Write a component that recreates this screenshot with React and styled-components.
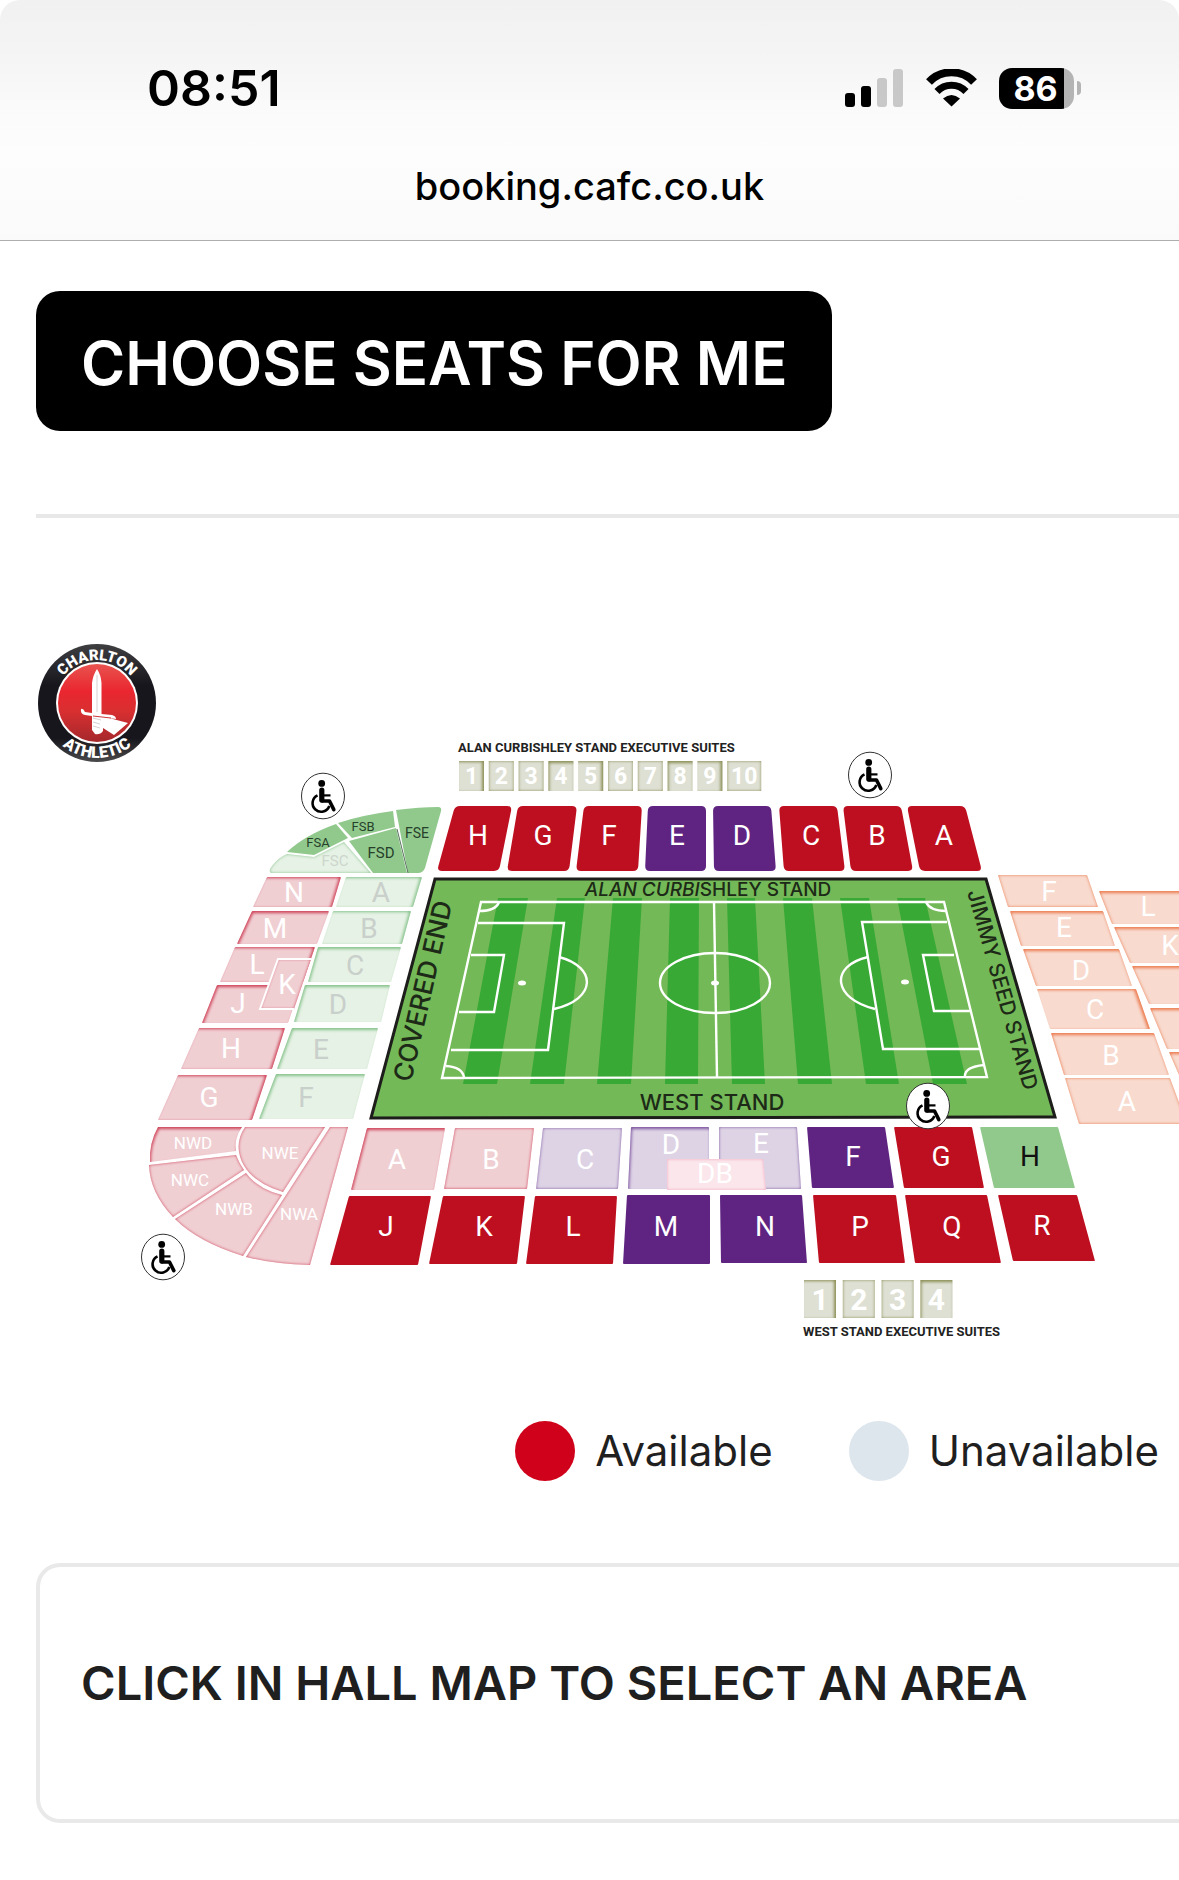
import React from "react";
import styled, { createGlobalStyle } from "styled-components";

const GlobalStyle = createGlobalStyle`
  * { box-sizing: border-box; }
  body { margin: 0; background: #fff; overflow-x: hidden; }
`;

const Page = styled.div`
  min-height: 100vh;
  color: #1f1f1f;
  font-family: Inter, "Liberation Sans", sans-serif;
`;

const BrowserBar = styled.header`
  display: flex;
  flex-direction: column;
  height: 241px;
  padding-top: 56px;
  border-bottom: 1px solid #aeaeb0;
  border-radius: 20px 20px 0 0;
  background: linear-gradient(#f1f1f1 0, #f4f4f4 50px, #fafafa 105px, #fdfdfd 150px, #fafafa 240px);
`;

const StatusRow = styled.div`
  display: flex;
  align-items: center;
  justify-content: space-between;
  height: 64px;
  padding: 0 98px 0 147px;
  color: #000;
`;

const Clock = styled.time`
  font-size: 50px;
  line-height: 64px;
  font-weight: 600;
`;

const StatusIcons = styled.div`
  display: flex;
  align-items: center;
  gap: 22px;
`;

const Battery = styled.div`
  display: flex;
  align-items: center;
  gap: 3px;
`;

const BatteryBody = styled.span`
  width: 75px;
  height: 41px;
  border-radius: 13px;
  background: linear-gradient(90deg, #000 65px, #b4b4b4 65px);
  color: #fff;
  padding-right: 2px;
  font-size: 34px;
  line-height: 41px;
  font-weight: 700;
  text-align: center;
`;

const BatteryTip = styled.span`
  width: 4px;
  height: 14px;
  border-radius: 0 4px 4px 0;
  background: #b4b4b4;
`;

const Address = styled.div`
  margin-top: 42px;
  color: #000;
  font-size: 38px;
  line-height: 48px;
  font-weight: 500;
  text-align: center;
`;

const Content = styled.main`
  padding: 50px 0 56px 36px;
`;

const ChooseButton = styled.button`
  display: block;
  height: 140px;
  padding: 4px 45px 0;
  border: 0;
  border-radius: 24px;
  background: #000;
  color: #fff;
  font: 600 60px/72px Inter, "Liberation Sans", sans-serif;
  white-space: nowrap;
`;

const Divider = styled.hr`
  height: 4px;
  margin: 83px 0 102px;
  border: 0;
  background: #e8e8e8;
`;

const MapFrame = styled.div`
  margin-left: -36px;
`;

const MapSvg = styled.svg`
  display: block;
  width: 100%;
  height: auto;
`;

const MapText = styled.text`
  fill: ${(p) => p.$color || "#fff"};
  font-family: ${(p) => (p.$wide ? "Inter" : "Roboto")}, "Liberation Sans", sans-serif;
  font-size: ${(p) => p.$size || 28}px;
  font-weight: ${(p) => p.$weight || 400};
  text-anchor: ${(p) => p.$anchor || "middle"};
`;

const Legend = styled.ul`
  display: flex;
  justify-content: flex-end;
  gap: 76px;
  margin: 61px 0 0;
  padding: 0 20px 0 0;
  list-style: none;
`;

const LegendItem = styled.li`
  display: flex;
  align-items: center;
  gap: 20px;
  font-size: 42px;
  line-height: 60px;
`;

const Dot = styled.span`
  width: 60px;
  height: 60px;
  border-radius: 50%;
  background: ${(p) => p.$color};
`;

const Panel = styled.section`
  margin-top: 82px;
  padding: 75px 41px 95px;
  border: 4px solid #e9e9e9;
  border-right: 0;
  border-radius: 24px 0 0 24px;
`;

const PanelTitle = styled.h2`
  margin: 0;
  font-size: 47px;
  line-height: 82px;
  font-weight: 600;
  white-space: nowrap;
`;

const FILLS = {
  red: "#be0f20",
  purple: "#5f2482",
  green: "#91c98d",
  pink: "#f0cfd3",
  mint: "#e6f2e5",
  lilac: "#ddd3e5",
  peach: "#f8dace",
  rose: "#fbe6ec",
  stone: "#dee0d3",
};

const EDGES = {
  pink: "#cf4258",
  mint: "#86c28b",
  lilac: "#7e55a0",
  peach: "#ec7c50",
  rose: "#f3a5bb",
  stone: "#8b8e55",
};

const SHIFTS = { n: [0, 0], tl: [1, 2], tr: [-2, 1] };

function quad(points, r) {
  const n = points.length;
  let d = "";
  points.forEach((p, i) => {
    const a = points[(i + n - 1) % n];
    const b = points[(i + 1) % n];
    const la = Math.hypot(a[0] - p[0], a[1] - p[1]);
    const lb = Math.hypot(b[0] - p[0], b[1] - p[1]);
    const s = [p[0] + ((a[0] - p[0]) * r) / la, p[1] + ((a[1] - p[1]) * r) / la];
    const e = [p[0] + ((b[0] - p[0]) * r) / lb, p[1] + ((b[1] - p[1]) * r) / lb];
    d += `${i ? "L" : "M"}${s[0]} ${s[1]}Q${p[0]} ${p[1]} ${e[0]} ${e[1]}`;
  });
  return d + "Z";
}

// [label, tone, top y, top-left x, top-right x, bottom y, bottom-left x, bottom-right x, label x, label y, shade]
const CURBISHLEY = [
  ["H", "red", 806, 455, 512, 871, 437, 499, 478, 845],
  ["G", "red", 806, 518, 577, 871, 507, 569, 543, 845],
  ["F", "red", 806, 584, 642, 871, 576, 638, 609, 845],
  ["E", "purple", 806, 648, 706, 871, 645, 706, 677, 845],
  ["D", "purple", 806, 713, 771, 871, 714, 776, 742, 845],
  ["C", "red", 806, 779, 837, 871, 784, 845, 811, 845],
  ["B", "red", 806, 843, 901, 871, 851, 913, 877, 845],
  ["A", "red", 806, 907, 965, 871, 920, 982, 944, 845],
];

const COVERED_END = [
  ["N", "pink", 877, 267, 341, 907, 253, 332, 294, 902, "tr"],
  ["M", "pink", 911, 252, 329, 944, 237, 317, 275, 938, "tl"],
  ["L", "pink", 947, 235, 315, 982, 220, 303, 257, 974, "tr"],
  ["J", "pink", 985, 217, 301, 1023, 202, 288, 238, 1013, "tl"],
  ["H", "pink", 1028, 199, 285, 1069, 181, 272, 231, 1058, "tr"],
  ["G", "pink", 1075, 178, 267, 1120, 158, 252, 209, 1107, "tr"],
  ["A", "mint", 877, 346, 422, 907, 336, 413, 381, 902, "tr"],
  ["B", "mint", 911, 333, 411, 944, 322, 402, 369, 938, "tr"],
  ["C", "mint", 947, 318, 401, 982, 308, 391, 355, 975, "tl"],
  ["D", "mint", 985, 305, 390, 1022, 294, 381, 338, 1014, "tl"],
  ["E", "mint", 1028, 292, 378, 1069, 277, 367, 321, 1059, "tl"],
  ["F", "mint", 1074, 276, 365, 1119, 259, 353, 306, 1107, "tl"],
];

const WEST = [
  ["A", "pink", 1128, 367, 445, 1190, 351, 434, 397, 1169, "tl"],
  ["B", "pink", 1128, 455, 534, 1189, 444, 527, 491, 1169, "n"],
  ["C", "lilac", 1128, 543, 622, 1189, 536, 618, 585, 1169, "n"],
  ["D", "lilac", 1127, 631, 709, 1189, 628, 709, 671, 1154, "tl"],
  ["E", "lilac", 1127, 719, 797, 1189, 719, 801, 761, 1153, "n"],
  ["DB", "rose", 1159, 667, 763, 1190, 667, 766, 715, 1183, "n"],
  ["F", "purple", 1127, 807, 885, 1188, 812, 894, 853, 1166],
  ["G", "red", 1127, 894, 972, 1188, 904, 984, 941, 1166],
  ["H", "green", 1127, 980, 1058, 1188, 994, 1075, 1030, 1166],
  ["J", "red", 1196, 349, 431, 1265, 330, 418, 386, 1236],
  ["K", "red", 1196, 443, 525, 1264, 429, 517, 484, 1236],
  ["L", "red", 1196, 535, 617, 1264, 526, 613, 573, 1236],
  ["M", "purple", 1195, 627, 710, 1264, 623, 710, 666, 1236],
  ["N", "purple", 1195, 720, 802, 1263, 721, 807, 765, 1236],
  ["P", "red", 1195, 813, 896, 1263, 819, 905, 860, 1236],
  ["Q", "red", 1195, 905, 987, 1263, 915, 1001, 952, 1236],
  ["R", "red", 1195, 998, 1077, 1261, 1013, 1095, 1042, 1235],
];

const JIMMY_SEED = [
  ["F", "peach", 875, 998, 1087, 907, 1008, 1098, 1049, 901, "n"],
  ["E", "peach", 911, 1010, 1103, 946, 1021, 1115, 1064, 937, "tl"],
  ["D", "peach", 949, 1023, 1119, 986, 1036, 1132, 1081, 980, "tl"],
  ["C", "peach", 989, 1037, 1136, 1029, 1050, 1150, 1095, 1019, "tr"],
  ["B", "peach", 1033, 1051, 1154, 1075, 1064, 1169, 1111, 1065, "tl"],
  ["A", "peach", 1078, 1065, 1170, 1124, 1079, 1187, 1127, 1111, "n"],
  ["L", "peach", 891, 1099, 1210, 924, 1112, 1210, 1148, 916, "tl"],
  ["K", "peach", 927, 1114, 1210, 963, 1130, 1210, 1170, 955, "tl"],
  ["", "peach", 966, 1132, 1210, 1004, 1149, 1210, 0, 0, "tl"],
  ["", "peach", 1008, 1150, 1210, 1049, 1167, 1210, 0, 0, "tl"],
  ["", "peach", 1052, 1169, 1210, 1100, 1190, 1210, 0, 0, "tl"],
];

const labelColor = (tone) => (tone === "mint" ? "#c9cfca" : tone === "green" ? "#111" : "#fff");

function Blocks({ items, radius = 1 }) {
  return items.map(([label, tone, ty, tl, tr, by, bl, br, x, y, shade], i) => (
    <g key={i}>
      <path
        d={quad([[tl, ty], [tr, ty], [br, by], [bl, by]], radius)}
        fill={FILLS[tone]}
        filter={shade ? `url(#${tone}-${shade})` : undefined}
      />
      {label && <MapText x={x} y={y} $color={labelColor(tone)}>{label}</MapText>}
    </g>
  ));
}

const STRIPES = [
  [498, 528, 463, 497], [557, 585, 530, 564], [613, 642, 597, 631], [670, 699, 665, 698],
  [727, 755, 732, 765], [783, 812, 798, 832], [840, 869, 866, 899], [897, 925, 933, 967],
];

function Pitch() {
  return (
    <g>
      <path d="M435 879H986L1055 1117L371 1118Z" fill="#74b957" stroke="#1d1d1b" strokeWidth="3" />
      {STRIPES.map(([a, b, c, d]) => (
        <path key={a} d={`M${a} 898H${b}L${d} 1084H${c}Z`} fill="#38a935" />
      ))}
      <g fill="none" stroke="#fff" strokeWidth="2.4">
        <path d="M481 902H944L987 1077L442 1078Z" />
        <path d="M714 902L717 1077" />
        <ellipse cx="715" cy="983" rx="55" ry="30" />
        <path d="M478 923H564L548 1050H451M471 955H504L494 1012H459" />
        <path d="M947 922H862L883 1049H979M954 955H923L934 1011H970" />
        <path d="M559 957C597 967 597 999 554 1009M868 957C829 966 833 999 875 1009" />
        <path d="M499 902Q496 911 479 911M446 1066Q462 1067 464 1077M926 902Q930 911 946 911M984 1065Q964 1067 965 1077" />
      </g>
      <g fill="#fff">
        <ellipse cx="522" cy="983" rx="4" ry="2.5" />
        <ellipse cx="715" cy="983" rx="4" ry="2.5" />
        <ellipse cx="905" cy="982" rx="4" ry="2.5" />
      </g>
      <MapText $wide $color="#1d2a17" $size={19} $weight={500} x="708" y="896">
        <tspan fontStyle="italic">ALAN CURBI</tspan>SHLEY STAND
      </MapText>
      <MapText $wide $color="#1d2a17" $size={22} $weight={500} x="712" y="1110">WEST STAND</MapText>
      <MapText $wide $color="#1d2a17" $size={26} $weight={500} $anchor="start" transform="translate(411 1083) rotate(-77)">
        COVERED END
      </MapText>
      <MapText $wide $color="#1d2a17" $size={21} $weight={500} $anchor="start" transform="translate(967 892) rotate(74)">
        JIMMY SEED STAND
      </MapText>
    </g>
  );
}

function FamilyCorner() {
  return (
    <g>
      <g fill={FILLS.green}>
        <path d="M287 852Q305 835 336 824L348 838L314 855Z" />
        <path d="M338 823Q362 815 393 811L395 827L352 838Z" />
        <path d="M396 810Q420 807 438 807Q442 807 441 811L425 868Q423 873 418 873H408Z" />
        <path d="M349 841L396 828L407 873H373Z" />
      </g>
      <path d="M397 829L408 873" stroke="#55705a" strokeWidth="1" />
      <path d="M271 873Q268 871 272 866Q279 857 287 854L314 857L344 842L371 873Z" fill={FILLS.mint} filter="url(#mint-n)" />
      <MapText $color="#26402a" $size={13} x="318" y="847">FSA</MapText>
      <MapText $color="#26402a" $size={13} x="363" y="831">FSB</MapText>
      <MapText $color="#26402a" $size={14} x="417" y="838">FSE</MapText>
      <MapText $color="#26402a" $size={15} x="381" y="858">FSD</MapText>
      <MapText $color="#cdd6cd" $size={15} x="335" y="866">FSC</MapText>
    </g>
  );
}

function NorthWestCorner() {
  return (
    <g>
      <g fill={FILLS.pink}>
        <path d="M158 1127H242Q234 1138 236 1151L150 1162Q149 1143 158 1127Z" filter="url(#pink-tl)" />
        <path d="M245 1127H325L283 1192Q244 1180 239 1152Q237 1139 245 1127Z" filter="url(#pink-n)" />
        <path d="M149 1165L236 1155Q239 1163 244 1170L173 1217Q150 1193 149 1165Z" filter="url(#pink-n)" />
        <path d="M175 1219L246 1173Q259 1190 282 1195L243 1256Q198 1242 175 1219Z" filter="url(#pink-n)" />
        <path d="M330 1127H348L310 1265Q275 1264 246 1257Z" filter="url(#pink-n)" />
      </g>
      <MapText $size={17} x="193" y="1149">NWD</MapText>
      <MapText $size={17} x="280" y="1159">NWE</MapText>
      <MapText $size={17} x="190" y="1186">NWC</MapText>
      <MapText $size={17} x="234" y="1215">NWB</MapText>
      <MapText $size={17} x="299" y="1220">NWA</MapText>
    </g>
  );
}

function Suites({ count, x, y, step, width, height, size, baseline }) {
  return Array.from({ length: count }, (_, i) => {
    const w = i === 9 ? width + 9 : width;
    const left = x + i * step;
    const shade = ["tr", "n", "n", "tl"][i % 4];
    return (
      <g key={i}>
        <rect x={left} y={y} width={w} height={height} fill={FILLS.stone} filter={`url(#stone-${shade})`} />
        <MapText $size={size} $weight={700} x={left + w / 2} y={baseline}>{i + 1}</MapText>
      </g>
    );
  });
}

function Wheelchair({ x, y }) {
  return (
    <g transform={`translate(${x} ${y})`} fill="none" stroke="#000">
      <ellipse rx="21.5" ry="22.8" fill="#fff" stroke="#333" strokeWidth="1" />
      <circle cx="-1.3" cy="-12.6" r="3.4" fill="#000" stroke="none" />
      <path d="M-1.2 -6V4" strokeWidth="5.2" strokeLinecap="round" />
      <path d="M-1 -0.6H7.5" strokeWidth="2.2" />
      <path d="M-1 5H6.5L10.8 13.6" strokeWidth="3.6" strokeLinejoin="round" strokeLinecap="round" />
      <path d="M-5.5 -0.6A8.6 8.6 0 1 0 6.3 10" strokeWidth="2.6" />
    </g>
  );
}

function Crest() {
  return (
    <g transform="translate(97 703)">
      <circle r="59" fill="url(#crest-ring)" />
      <circle r="41" fill="#fff" />
      <circle r="39" fill="url(#crest-red)" />
      <path id="crest-top" d="M-43 0A43 43 0 0 1 43 0" fill="none" />
      <path id="crest-bottom" d="M-55 0A55 55 0 0 0 55 0" fill="none" />
      <MapText $size={15} $weight={900}>
        <textPath href="#crest-top" startOffset="50%">CHARLTON</textPath>
      </MapText>
      <MapText $size={16} $weight={900}>
        <textPath href="#crest-bottom" startOffset="50%">ATHLETIC</textPath>
      </MapText>
      <path d="M0 -34Q4 -28 4.5 -20V11L15 12Q19 13 19 16L12 15L31 20L17 32L6 25V28Q3 32 -2 31L-5 27V13L-12 12Q-17 11 -16 6Q-14 5 -12 9L-5 10V-20Q-4 -28 0 -34Z" fill="#fff" />
      <path d="M0 -28V9M-4 15L4 17M-4 19L3 21M-4 23L3 25" stroke="#d9d0d0" strokeWidth="1" />
      <path d="M-4 13L14 15" stroke="#cf3a3c" strokeWidth="1" />
    </g>
  );
}

function StadiumMap() {
  return (
    <MapSvg viewBox="0 620 1179 740" role="img" aria-label="Stadium seating plan">
      <defs>
        {Object.entries(EDGES).flatMap(([tone, color]) =>
          Object.entries(SHIFTS).map(([name, [dx, dy]]) => (
            <filter key={tone + name} id={`${tone}-${name}`} x="-20%" y="-20%" width="140%" height="140%" colorInterpolationFilters="sRGB">
              <feFlood floodColor={color} result="c" />
              <feComposite in="c" in2="SourceAlpha" operator="out" result="outside" />
              <feGaussianBlur in="outside" stdDeviation="1.5" result="soft" />
              <feOffset in="soft" dx={dx} dy={dy} result="moved" />
              <feComposite in="moved" in2="SourceAlpha" operator="in" result="edge" />
              <feMerge>
                <feMergeNode in="SourceGraphic" />
                <feMergeNode in="edge" />
              </feMerge>
            </filter>
          ))
        )}
        <linearGradient id="crest-red" x1="0" y1="0" x2="0" y2="1">
          <stop offset="0" stopColor="#e8534f" />
          <stop offset="0.35" stopColor="#ea2630" />
          <stop offset="0.6" stopColor="#d92f31" />
          <stop offset="1" stopColor="#a5282b" />
        </linearGradient>
        <linearGradient id="crest-ring" x1="0" y1="0" x2="0" y2="1">
          <stop offset="0" stopColor="#3f3f42" />
          <stop offset="0.35" stopColor="#17161c" />
          <stop offset="0.8" stopColor="#17161c" />
          <stop offset="1" stopColor="#4a4a4c" />
        </linearGradient>
      </defs>
      <Crest />
      <MapText $color="#222" $size={13} $weight={700} $anchor="start" x="458" y="752">ALAN CURBISHLEY STAND EXECUTIVE SUITES</MapText>
      <Suites count={10} x={459} y={761} step={29.8} width={25} height={30} size={23} baseline={784} />
      <Blocks items={CURBISHLEY} radius={5} />
      <FamilyCorner />
      <Blocks items={COVERED_END} />
      <path d="M278 959H311L294 1009H260Z" fill={FILLS.pink} filter="url(#pink-n)" />
      <path d="M311 959H278L260 1009H294" fill="none" stroke="#fff" strokeWidth="2" />
      <MapText x="287" y="994">K</MapText>
      <Pitch />
      <Blocks items={JIMMY_SEED} />
      <NorthWestCorner />
      <Blocks items={WEST} />
      <Suites count={4} x={804} y={1280} step={38.8} width={32} height={38} size={30} baseline={1310} />
      <MapText $color="#222" $size={13} $weight={700} $anchor="start" x="803" y="1336">WEST STAND EXECUTIVE SUITES</MapText>
      <Wheelchair x={323} y={796} />
      <Wheelchair x={870} y={775} />
      <Wheelchair x={928} y={1106} />
      <Wheelchair x={163} y={1257} />
    </MapSvg>
  );
}

function SignalIcon() {
  return (
    <svg width="59" height="38" viewBox="0 0 59 38" aria-hidden="true">
      <rect x="0" y="24" width="10" height="14" rx="3" />
      <rect x="16" y="17" width="10" height="21" rx="3" />
      <rect x="32" y="9" width="10" height="29" rx="3" fill="#c8c8c8" />
      <rect x="48" y="0" width="10" height="38" rx="3" fill="#c8c8c8" />
    </svg>
  );
}

function WifiIcon() {
  return (
    <svg width="51" height="38" viewBox="0 0 51 38" aria-hidden="true">
      <path d="M3 13A31 31 0 0 1 48 13" fill="none" stroke="#000" strokeWidth="8" />
      <path d="M11 22.500A20 20 0 0 1 40 22.500" fill="none" stroke="#000" strokeWidth="7" />
      <path d="M25.500 37.500L17 29.500Q25.500 22.500 34 29.500Z" />
    </svg>
  );
}

export default function App() {
  return (
    <Page>
      <GlobalStyle />
      <BrowserBar>
        <StatusRow>
          <Clock>08:51</Clock>
          <StatusIcons>
            <SignalIcon />
            <WifiIcon />
            <Battery>
              <BatteryBody>86</BatteryBody>
              <BatteryTip />
            </Battery>
          </StatusIcons>
        </StatusRow>
        <Address>booking.cafc.co.uk</Address>
      </BrowserBar>
      <Content>
        <ChooseButton type="button">CHOOSE SEATS FOR ME</ChooseButton>
        <Divider />
        <MapFrame>
          <StadiumMap />
        </MapFrame>
        <Legend>
          <LegendItem><Dot $color="#d0021b" />Available</LegendItem>
          <LegendItem><Dot $color="#dde5ed" />Unavailable</LegendItem>
        </Legend>
        <Panel>
          <PanelTitle>CLICK IN HALL MAP TO SELECT AN AREA</PanelTitle>
        </Panel>
      </Content>
    </Page>
  );
}
